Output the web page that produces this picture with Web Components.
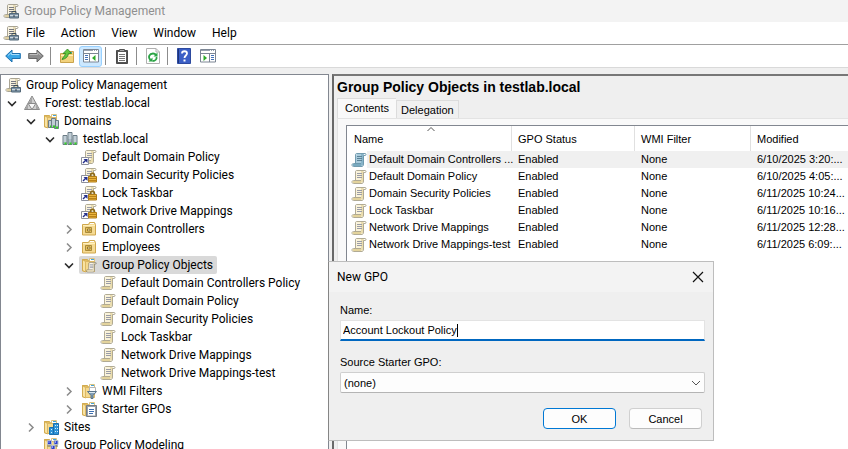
<!DOCTYPE html>
<html lang="en">
<head>
<meta charset="utf-8">
<title>Group Policy Management</title>
<style>
  html, body { height: 100%; margin: 0; }
  body { overflow: hidden; background: #efefef; color: #000; font: 12px Roboto, "Open Sans", sans-serif; }
</style>
</head>
<body>
<gpm-window></gpm-window>

<script>
const scroll = (paper = '#faf3d9', edge = '#a8a18a', curl = '#e3d39c', ink = '#9a9ca8') => `
  <path d="M5.500 1.500h8l-1 2v8.500l-1.500 2.500H2.500l1.500-3z" fill="${paper}"/>
  <path d="M10 2h2.500v10l-1 1.500H10z" fill="${curl}" opacity=".7"/>
  <path d="M4.500 11V3c0-1 .3-1.500 1-1.500h8.500c.7 0 1 .4 1 1 0 .7-.4 1-1 1h-1.500v8.500c0 1.500-.6 2.500-1.500 2.500H2.500c-.9 0-1.500-.5-1.500-1.500s.6-1.500 1.500-1.500h7.500" stroke="${edge}" stroke-width=".9"/>
  <path d="M1.500 12h8.500v2H2z" fill="${curl}"/>
  <path d="M6 4.500h5M6 6.500h5M6 8.500h5" stroke="${ink}"/>`;
const folder = `
  <path d="M1.500 2.500h5l1 1.500h6v10h-12z" fill="#e2bd5e" stroke="#d2ab50"/>
  <path d="M8.500 1.500h5v3h-5z" fill="#fff" stroke="#dcc381"/><path d="M10 2.500h3" stroke="#44a4d8"/>
  <path d="M1.500 2.500l3 2v10.500l-3-1.500z" fill="#f8e3a4" stroke="#d2ab50"/><path d="M4.500 4.500h9v10h-9z" fill="#f5d98d" stroke="#dcb865"/>`;
const tower = (x, y, h) => `
  <path d="M${x} ${y}h4v${h}h-4z" fill="#a9bac3" stroke="#6b7c86"/>
  <path d="M${x + .5} ${y + 1.500}h3M${x + .5} ${y + 3.500}h3M${x + .5} ${y + 5.500}h3" stroke="#e7eef2" stroke-width=".8"/>
  <path d="M${x + 1.500} ${y + h - 2}h2v2h-2z" fill="#35d321"/>`;
const shortcut = `<path d="M.5 8.500h7v7h-7z" fill="#fff" stroke="#8d909c"/><path d="M2 14l3-3" stroke="#26308c" stroke-width="1.400"/><path d="M2.500 10h4v4z" fill="#26308c"/>`;
const lock = `<path d="M9.500 10V8.500c0-3 4-3 4 0V10" stroke="#8e6a18" stroke-width="1.500"/>
  <path d="M7.500 9.500h8v5.500h-8z" fill="#e9b43c" stroke="#b07c16"/><path d="M8 11.500h7M8 13.500h7" stroke="#b98118"/>`;
const paneGlyph = (right) => `<path d="M.5 1.500h15v12.500H.5z" fill="#fff" stroke="#7c8694"/>
  <path d="M1 2.500h14" stroke="#98a2b0"/><path d="M1 5.500h14" stroke="#7c8694"/><path d="M10 2.500h1M12 2.500h1M14 2.500h1" stroke="#fff"/>
  <path d="M${right ? 9.500 : 6.500} 6v8" stroke="#7c8694"/>
  <path d="${right ? 'M11 7.500h3M11 9.500h3M11 11.500h3' : 'M2 7.500h3M2 9.500h3M2 11.500h3'}" stroke="#4472b8"/>`;
const smallScreen = (x, y) => `<path d="M${x} ${y}h4v4h-4z" fill="#2b3fd0" stroke="#b6bcc8"/><path d="M${x + 1} ${y + 1.500}h1" stroke="#fff"/><path d="M${x} ${y + 5.500}h4" stroke="#59636f"/>`;

const ICONS = {
  scroll: scroll(),
  scrollSelected: scroll('#a9cbdc', '#6793a8', '#79aac0', '#5b8296'),
  console: scroll('#f8f2de', '#9f9a88', '#ddd0a4', '#75777f') + `<path d="M6.500 10.500h9v4.500h-9z" fill="#7f95a7" stroke="#536878"/>
    <path d="M9 10V8.500h4V10" stroke="#3d4f5c"/><path d="M7 12.500h8" stroke="#cdd8df"/><path d="M10.500 12h1v2h-1z" fill="#2d3b46"/>`,
  forest: `<path d="M8 1L15.500 14.500H.5z" fill="#cfcfcf" stroke="#8a8a8a"/>
    <path d="M8 2v6H4.500zM4 9v5H1zM12 9v5h3z" fill="#a6a6a6"/><path d="M4.200 8.500h7.600L8 14.500z" fill="#f8f8f8" stroke="#8a8a8a"/>`,
  folderDomains: folder + tower(5.500, 7.500, 7) + tower(11.500, 7.500, 8) + tower(8.500, 5.500, 9),
  domain: tower(1, 4.500, 9) + tower(11, 4.500, 9) + tower(6, 1.500, 12),
  link: scroll() + shortcut,
  linkLocked: scroll() + shortcut + lock,
  ou: `<path d="M1.500 3.500h6l1-2h5l1 2v10.500h-13z" fill="#f5da93" stroke="#cfa74c"/><path d="M9 2.500h4" stroke="#fff"/><path d="M2 4.500h12" stroke="#fff0bd"/>
    <path d="M4.500 6.500h6v5h-6z" fill="#e5c05a" stroke="#a98a3a"/><path d="M6.500 8h2.500v2H6.500z" fill="#fff2c2" stroke="#95752b"/>`,
  folderScroll: folder + `<g transform="translate(4.500 4.500) scale(.72)">${scroll('#fffaf0', '#7f7a68', '#ded2a8', '#85889a')}</g>`,
  folderFilter: folder + `<path d="M8.500 4.500h6v5h-6z" fill="#fff" stroke="#b5b5b5"/><path d="M6.500 8.500h9l-3.500 4v3h-2v-3z" fill="#7f9db5" stroke="#5b7488"/><path d="M8 9.500h6" stroke="#dbe8f0"/>`,
  folderStarter: folder + `<path d="M5.500 4.500h10v11h-10z" fill="#98a0a8" stroke="#747c86"/><path d="M7 6h7v8.500H7z" fill="#fff"/><path d="M8 8.500h5M8 10.500h5M8 12.500h4" stroke="#3d6fb0"/>`,
  folderSites: folder + `<path d="M10.500 4.500h5v11h-5zM6.500 8.500h4v7h-4z" fill="#2f95d8" stroke="#1a6fae"/>
    <path d="M12 6.500h1M14 6.500h1M12 9.500h1M14 9.500h1M12 12.500h1M14 12.500h1M8 10.500h1M8 13.500h1" stroke="#d7effc"/>`,
  folderModel: folder + smallScreen(4.500, 3.500) + smallScreen(11, 3.500) + smallScreen(8, 8.500),
  back: `<path d="M.7 8L7 2v3.500h8.300v5H7V14z" fill="#37a5e6" stroke="#1c6fae"/><path d="M3 7.500L6.300 4.500v2h8" stroke="#a4dcfb"/>`,
  forward: `<path d="M15.300 8L9 2v3.500H.7v5H9V14z" fill="#8d8d8d" stroke="#666"/><path d="M1.700 6.500h8v-2l3 3" stroke="#bdbdbd"/>`,
  up: `<path d="M1.500 5.500h7l1-2h5v11h-13z" fill="#f2d27d" stroke="#c9a34c"/><path d="M2 7.500h12" stroke="#fff0bd"/><path d="M11 4.500h2" stroke="#44a4d8"/>
    <path d="M3 11.500c1-2.500 3-3.500 3.500-6H4L8.500 1l4 4.500H9.500C9 9 6.500 11 3 11.500z" fill="#62c63f" stroke="#2b8420" stroke-width=".8"/>`,
  treePane: paneGlyph(false) + `<path d="M12.500 7v6L9 10z" fill="#2daa29"/>`,
  actionPane: paneGlyph(true) + `<path d="M3.500 7v6L7 10z" fill="#2daa29"/>`,
  clipboard: `<path d="M2.500 2.500h11v13h-11z" fill="#555" stroke="#4a4a4a"/><path d="M4 4h8v10H4z" fill="#fff"/><path d="M5.500 1.500h5v2h-5z" fill="#aaa" stroke="#555"/>
    <path d="M5 6.500h6M5 8.500h6M5 10.500h6M5 12.500h6" stroke="#777"/>`,
  refresh: `<path d="M1.500.5h9.500l3.500 3.500v11.500h-13z" fill="#fff" stroke="#b0b0b0"/><path d="M11 .5V4h3.500" stroke="#b0b0b0"/>
    <path d="M5.500 12c-3-3-1-6.500 2.500-6.500 1.500 0 2.500.7 3 1.500M7.500 13c3 0 4.500-2 4-4" stroke="#2ba345" stroke-width="1.800"/><path d="M12.500 4.500v4h-4zM7.500 9.500v4h-4z" fill="#2ba345"/>`,
  help: `<path d="M1.500.5h13v15h-13z" fill="#3b5fc6" stroke="#2d4a9f"/><path d="M2.500 1v14" stroke="#1d347b"/>
    <path d="M6 5.500c0-3 5-3 5 0 0 2-2.500 2-2.500 4.500" stroke="#fff" stroke-width="1.800"/><path d="M7.500 11.500h2v2h-2z" fill="#fff"/>`,
  chevronDown: `<path d="M4 6.500l4 4 4-4" stroke="#2b2b2b" stroke-width="1.600"/>`,
  chevronRight: `<path d="M6 4.500l4 4-4 4" stroke="#8a8a8a" stroke-width="1.500"/>`,
  comboArrow: `<path d="M4 6l4 4 4-4" stroke="#555"/>`,
  close: `<path d="M3 3l10 10M13 3L3 13" stroke="#111" stroke-width="1.200"/>`,
  sortUp: `<path d="M4.500 10L8 6.500 11.500 10" stroke="#555"/>`
};

function define(name, html, setup) {
  const template = document.createElement('template');
  template.innerHTML = '<style>*{box-sizing:border-box}</style>' + html;
  customElements.define(name, class extends HTMLElement {
    connectedCallback() {
      if (this.shadowRoot) return;
      const root = this.attachShadow({ mode: 'open' });
      root.append(template.content.cloneNode(true));
      if (setup) setup(this, root);
    }
  });
}

function icon(name) {
  const el = document.createElement('ui-icon');
  el.setAttribute('name', name);
  return el;
}

define('ui-icon', `<style>:host{display:inline-block;flex:none;width:16px;height:16px} svg{display:block;width:100%;height:100%}</style>
  <svg viewBox="0 0 16 16" fill="none" aria-hidden="true"></svg>`,
  (el, root) => { root.querySelector('svg').innerHTML = ICONS[el.getAttribute('name')] || ''; });

define('title-bar', `<style>
  :host{display:flex;align-items:center;gap:5px;height:22px;padding-left:3px;background:#f3f3f3;color:#8f8f8f}
  </style><ui-icon name="console"></ui-icon><slot></slot>`);

define('menu-bar', `<style>
  :host{display:flex;align-items:center;height:22px;padding-left:3px;background:#fff}
  nav{display:flex;gap:16px;padding-left:7px}
  button{border:0;padding:0;background:none;font:inherit;color:inherit}
  </style><ui-icon name="console"></ui-icon>
  <nav><button>File</button><button>Action</button><button>View</button><button>Window</button><button>Help</button></nav>`);

define('tool-button', `<style>
  :host{display:block}
  button{display:grid;place-items:center;width:23px;height:21px;padding:0;border:1px solid transparent;border-radius:3px;background:none}
  :host([pressed]) button{background:#cce8ff;border-color:#99d1ff}
  </style><button></button>`,
  (el, root) => {
    const button = root.querySelector('button');
    button.append(icon(el.getAttribute('icon')));
    button.setAttribute('aria-label', el.getAttribute('label'));
  });

define('tool-bar', `<style>
  :host{display:flex;align-items:center;height:24px;padding-left:1px;background:#fff;border-top:1px solid #a0a0a0;border-bottom:1px solid #d9d9d9}
  i{width:1px;height:18px;margin:0 4px 0 3px;background:#8c8c8c}
  div{display:flex;gap:1px}
  </style>
  <tool-button icon="back" label="Back"></tool-button><tool-button icon="forward" label="Forward"></tool-button><i></i>
  <div><tool-button icon="up" label="Up one level"></tool-button><tool-button icon="treePane" label="Show console tree" pressed></tool-button></div><i></i>
  <tool-button icon="clipboard" label="Properties"></tool-button><i></i>
  <tool-button icon="refresh" label="Refresh"></tool-button><i></i>
  <div><tool-button icon="help" label="Help"></tool-button><tool-button icon="actionPane" label="Show action pane"></tool-button></div>`);

define('tree-item', `<style>
  :host{display:flex;align-items:center;height:18px;padding-left:calc(var(--depth) * 19px + 3px);white-space:nowrap}
  .chevron{display:flex;width:18px;flex:none}
  .label{display:flex;align-items:center;gap:5px;height:18px;padding:0 4px 0 2px;border-radius:2px}
  :host([selected]) .label{background:#d9d9d9}
  :host([root]){padding-left:2px}
  :host([root]) .chevron{display:none}
  </style><span class="chevron"></span><span class="label"><slot></slot></span>`,
  (el, root) => {
    el.setAttribute('role', 'treeitem');
    const state = el.getAttribute('state');
    if (state) root.querySelector('.chevron').append(icon(state === 'open' ? 'chevronDown' : 'chevronRight'));
    root.querySelector('.label').prepend(icon(el.getAttribute('icon')));
  });

const TREE = [
  [0, 'console', '', 'Group Policy Management'],
  [1, 'forest', 'open', 'Forest: testlab.local'],
  [2, 'folderDomains', 'open', 'Domains'],
  [3, 'domain', 'open', 'testlab.local'],
  [4, 'link', '', 'Default Domain Policy'],
  [4, 'linkLocked', '', 'Domain Security Policies'],
  [4, 'linkLocked', '', 'Lock Taskbar'],
  [4, 'linkLocked', '', 'Network Drive Mappings'],
  [4, 'ou', 'closed', 'Domain Controllers'],
  [4, 'ou', 'closed', 'Employees'],
  [4, 'folderScroll', 'open', 'Group Policy Objects'],
  [5, 'scroll', '', 'Default Domain Controllers Policy'],
  [5, 'scroll', '', 'Default Domain Policy'],
  [5, 'scroll', '', 'Domain Security Policies'],
  [5, 'scroll', '', 'Lock Taskbar'],
  [5, 'scroll', '', 'Network Drive Mappings'],
  [5, 'scroll', '', 'Network Drive Mappings-test'],
  [4, 'folderFilter', 'closed', 'WMI Filters'],
  [4, 'folderStarter', 'closed', 'Starter GPOs'],
  [2, 'folderSites', 'closed', 'Sites'],
  [2, 'folderModel', '', 'Group Policy Modeling']
];
define('console-tree', `<style>
  :host{display:block;min-height:0;overflow:hidden;background:#fff;border:1px solid #828790;border-bottom:0;padding-top:1px}
  </style><div role="tree" aria-label="Console tree"></div>`,
  (el, root) => {
    root.querySelector('div').innerHTML = TREE.map(([depth, glyph, state, text]) =>
      `<tree-item style="--depth:${Math.max(depth - 1, 0)}" icon="${glyph}" state="${state}"${depth ? '' : ' root'}${glyph === 'folderScroll' ? ' selected' : ''}>${text}</tree-item>`).join('');
  });

const GPOS = [
  ['Default Domain Controllers ...', '6/10/2025 3:20:...'],
  ['Default Domain Policy', '6/10/2025 4:05:...'],
  ['Domain Security Policies', '6/11/2025 10:24...'],
  ['Lock Taskbar', '6/11/2025 10:16...'],
  ['Network Drive Mappings', '6/11/2025 12:28...'],
  ['Network Drive Mappings-test', '6/11/2025 6:09:...']
];
define('gpo-list', `<style>
  :host{display:block;overflow:hidden;background:#fff;border:1px solid #828790;border-right:0;border-bottom:0}
  table{width:100%;border-collapse:separate;border-spacing:0;table-layout:fixed;font:11px "Liberation Sans",Arial,sans-serif;white-space:nowrap}
  th{height:25px;padding:1px 0 0 6px;text-align:left;font-weight:400;border-right:1px solid #e0e0e0}
  th:first-child{padding-left:7px}
  th:last-child{border-right:0}
  .sort{position:absolute;left:76px;top:-5px}
  thead{position:relative}
  td{height:17px;padding:0 0 0 6px;line-height:17px}
  td:first-child{padding-left:4px}
  .name{display:flex;align-items:center;height:17px}
  .name span{flex:1;padding-left:2px}
  tr.sel td:not(:first-child),tr.sel .name span{background:#f0f0f0}
  </style>
  <table><colgroup><col style="width:165px"><col style="width:123px"><col style="width:116px"><col></colgroup>
  <thead><tr><th>Name<ui-icon class="sort" name="sortUp"></ui-icon></th><th>GPO Status</th><th>WMI Filter</th><th>Modified</th></tr></thead><tbody></tbody></table>`,
  (el, root) => {
    root.querySelector('tbody').innerHTML = GPOS.map(([name, date], i) =>
      `<tr${i ? '' : ' class="sel"'}><td><div class="name"><ui-icon name="${i ? 'scroll' : 'scrollSelected'}"></ui-icon><span>${name}</span></div></td><td>Enabled</td><td>None</td><td>${date}</td></tr>`).join('');
  });

define('result-pane', `<style>
  :host{display:flex;flex-direction:column;min-width:0;min-height:0;padding-left:3px;background:#efefef;border-top:2px solid #777;border-left:2px solid #696969}
  h1{margin:0;font:bold 14px/22px "Liberation Sans",Arial,sans-serif}
  .tabs{display:flex;align-items:flex-end;height:20px;font:11px "Liberation Sans",Arial,sans-serif}
  button{border:1px solid #dcdcdc;border-bottom:0;background:#f0f0f0;font:inherit;color:inherit;height:18px;padding:0 4px}
  button[aria-selected=true]{height:20px;background:#f9f9f9;border-right:0;padding:0 7px 2px}
  .panel{flex:1;min-height:0;display:grid;padding:6px 0 0 8px;background:#f9f9f9;border-top:1px solid #e3e3e3;border-left:1px solid #e3e3e3}
  </style>
  <h1><slot></slot></h1>
  <div class="tabs" role="tablist"><button role="tab" aria-selected="true">Contents</button><button role="tab" aria-selected="false">Delegation</button></div>
  <div class="panel" role="tabpanel"><gpo-list></gpo-list></div>`);

define('new-gpo-dialog', `<style>
  :host{display:block;background:#efefef;border:1px solid #bdbdbd;border-left-color:#858585;font:11px "Liberation Sans",Arial,sans-serif}
  header{display:flex;align-items:center;justify-content:space-between;height:30px;padding:0 7px 0 8px;background:#f3f3f3;font:12px Roboto,sans-serif}
  h2{margin:0;font:inherit}
  button{font:inherit;color:inherit}
  header button{display:grid;border:0;background:none;padding:0}
  form{display:grid;padding:10px 8px 11px 11px}
  label{height:16px;line-height:16px}
  .field{display:flex;align-items:center;height:21px;margin:2px 0 13px;background:#fff;border:1px solid #e3e3e3;border-bottom:2px solid #0067c0;cursor:text}
  .field input{field-sizing:content;min-width:0;border:0;outline:0;padding:0 0 0 2px;background:none;font:inherit;color:inherit}
  .caret{width:1px;height:13px;background:#000}
  .combo{display:grid;align-items:center;margin:2px 0 15px}
  .combo>*{grid-area:1/1}
  .combo ui-icon{justify-self:end;margin-right:1px;pointer-events:none}
  select{appearance:none;height:21px;padding:0 3px;border:1px solid #cfcfcf;border-bottom-color:#b4b4b4;border-radius:2px;background:#fdfdfd;font:inherit;color:inherit}
  footer{display:flex;justify-content:flex-end;gap:13px;padding-right:3px}
  footer button{width:73px;height:21px;padding:0;background:#fdfdfd;border:1px solid #d0d0d0;border-bottom-color:#bbb;border-radius:4px}
  footer .default{border-color:#0078d4}
  </style>
  <header><h2>New GPO</h2><button aria-label="Close"><ui-icon name="close"></ui-icon></button></header>
  <form>
    <label for="name">Name:</label>
    <div class="field"><input id="name" type="text" value="Account Lockout Policy"><span class="caret"></span></div>
    <label for="starter">Source Starter GPO:</label>
    <div class="combo"><select id="starter"><option>(none)</option></select><ui-icon name="comboArrow"></ui-icon></div>
    <footer><button type="button" class="default">OK</button><button type="button">Cancel</button></footer>
  </form>`, (el) => { el.setAttribute('role', 'dialog'); el.setAttribute('aria-label', 'New GPO'); });

define('gpm-window', `<style>
  :host{display:flex;flex-direction:column;height:100vh;overflow:hidden;position:relative}
  main{flex:1;min-height:0;display:grid;grid-template-columns:329px minmax(0,1fr);grid-template-rows:minmax(0,1fr);gap:3px;padding-top:6px}
  new-gpo-dialog{position:absolute;left:328px;top:261px;width:386px}
  </style>
  <title-bar>Group Policy Management</title-bar><menu-bar></menu-bar><tool-bar></tool-bar>
  <main><console-tree></console-tree><result-pane>Group Policy Objects in testlab.local</result-pane></main>
  <new-gpo-dialog></new-gpo-dialog>`);
</script>
</body>
</html>
